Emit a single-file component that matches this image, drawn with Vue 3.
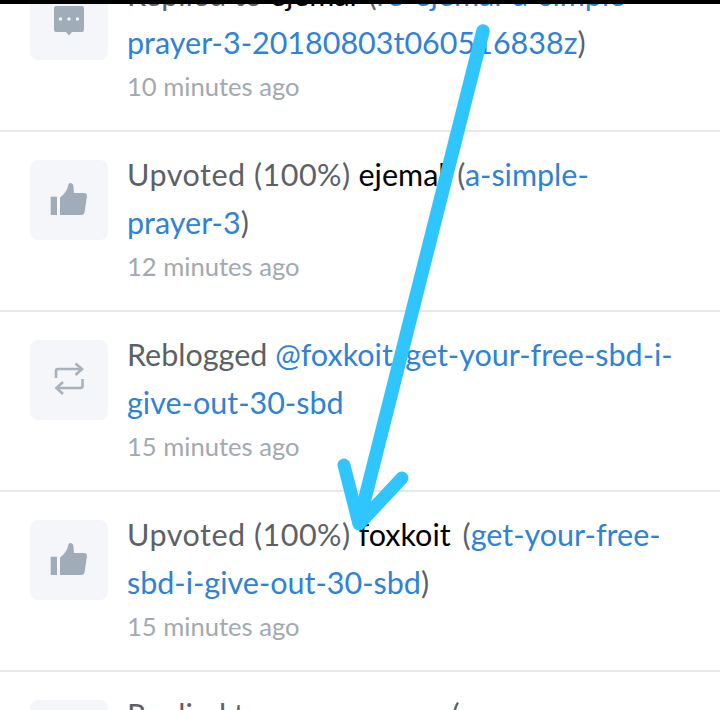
<template>
  <div class="page">
    <div class="feed">
      <div v-for="item in items" :key="item.id" class="row">
        <div class="icon-box">
          <svg v-if="item.icon === 'comment'" viewBox="0 0 40 40" class="icon">
            <path d="M7 6h26a2 2 0 0 1 2 2v22a2 2 0 0 1-2 2h-10l-3 3.500-3-3.500H7a2 2 0 0 1-2-2V8a2 2 0 0 1 2-2z" fill="#a0adb8" />
            <circle cx="11.500" cy="19" r="1.700" fill="#f4f6f9" />
            <circle cx="20" cy="19" r="1.700" fill="#f4f6f9" />
            <circle cx="28.500" cy="19" r="1.700" fill="#f4f6f9" />
          </svg>
          <svg v-else-if="item.icon === 'thumb'" viewBox="0 0 40 40" class="icon">
            <rect x="1.700" y="16.700" width="6.300" height="18.300" fill="#a0adb8" />
            <path d="M11 17.500V35h21q3 0 3.500-2.500L38 16q0-3-3-3H25q-.5-4-.5-6 0-4-3.500-4-1.500 0-2 3-1 6-8 11.500z" fill="#a0adb8" />
          </svg>
          <svg v-else viewBox="0 0 40 40" class="icon" fill="none" stroke="#a7b2bc" stroke-width="2.600">
            <path d="M7 18v-7q0-2 2-2h23" />
            <path d="M26.500 3.500 33 9l-6.500 6" />
            <path d="M33.500 19v7q0 2-2 2H8" />
            <path d="M14 22 7.500 28l6.500 6" />
          </svg>
        </div>
        <div class="body">
          <div class="desc">
            <span :class="{ wide: item.icon === 'thumb' }">{{ item.action }}</span>
            {{ " " }}
            <span v-if="item.author" class="author">{{ item.author }}</span>
            {{ " " }}
            <span v-if="item.paren" class="paren">(</span><a class="link">{{ item.link }}</a><template v-if="item.paren">)</template>
          </div>
          <div class="when">{{ item.when }}</div>
        </div>
      </div>
    </div>
    <div class="top-edge"></div>
    <svg class="arrow" viewBox="0 0 720 710" fill="none" stroke="#2fc5ff" stroke-linecap="round" stroke-linejoin="round">
      <path d="M483 31 L359 522" stroke-width="13.500" />
      <path d="M344 465 L359 524 L402 478" stroke-width="13" />
    </svg>
  </div>
</template>

<script setup>
const items = [
  {
    id: 1,
    icon: "comment",
    action: "Replied to",
    author: "ejemal",
    link: "re-ejemal-a-simple-prayer-3-20180803t060516838z",
    paren: true,
    when: "10 minutes ago",
  },
  {
    id: 2,
    icon: "thumb",
    action: "Upvoted (100%)",
    author: "ejemal",
    link: "a-simple-prayer-3",
    paren: true,
    when: "12 minutes ago",
  },
  {
    id: 3,
    icon: "repeat",
    action: "Reblogged",
    link: "@foxkoit/get-your-free-sbd-i-give-out-30-sbd",
    when: "15 minutes ago",
  },
  {
    id: 4,
    icon: "thumb",
    action: "Upvoted (100%)",
    author: "foxkoit",
    link: "get-your-free-sbd-i-give-out-30-sbd",
    paren: true,
    when: "15 minutes ago",
  },
  {
    id: 5,
    icon: "comment",
    action: "Replied to",
    author: "oceanmoons",
    link: "re-oceanmoons-some-comment",
    paren: true,
    when: "",
  },
];
</script>

<style>
html,
body {
  margin: 0;
  background: #fff;
}
</style>

<style scoped>
.page {
  position: relative;
  width: 720px;
  height: 710px;
  overflow: hidden;
  background: #fff;
  font-family: Lato, "Open Sans", sans-serif;
}

.feed {
  margin-top: -48px;
}

.row {
  display: flex;
  align-items: flex-start;
  gap: 19px;
  height: 180px;
  padding: 28px 40px 0 30px;
  box-sizing: border-box;
  border-bottom: 2px solid #e6e8ea;
}

.icon-box {
  flex: none;
  display: flex;
  align-items: center;
  justify-content: center;
  width: 78px;
  height: 80px;
  background: #f4f6f9;
  border-radius: 8px;
}

.icon {
  width: 40px;
  height: 40px;
}

.body {
  flex: 1;
  margin-top: -10px;
}

.desc {
  font-size: 30.500px;
  line-height: 48px;
  color: #5c6166;
}

.wide {
  letter-spacing: 0.500px;
}

.paren {
  margin-left: 4px;
}

.author {
  color: #000;
}

.link {
  color: #2f82d6;
}

.when {
  margin-top: 2px;
  font-size: 25.600px;
  line-height: 36px;
  color: #a2a9af;
}

.top-edge {
  position: absolute;
  top: 0;
  left: 0;
  right: 0;
  height: 4px;
  background: #000;
}

.arrow {
  position: absolute;
  top: 0;
  left: 0;
  width: 720px;
  height: 710px;
}
</style>
